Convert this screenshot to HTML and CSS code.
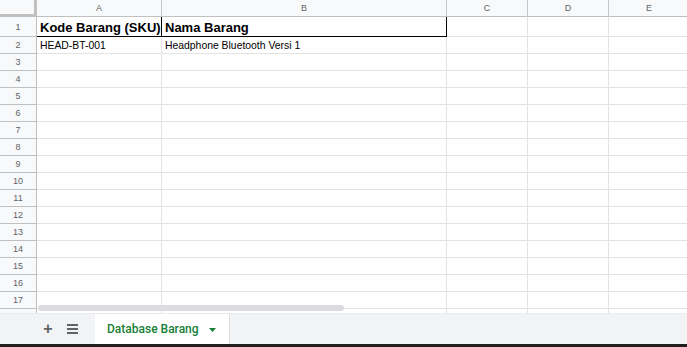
FILE: index.html
```html
<!DOCTYPE html>
<html lang="id">
<head>
  <meta charset="UTF-8" />
  <title>Database Barang</title>
  <link rel="stylesheet" href="styles.css">
</head>
<body>
  <div class="sheet">
    <div class="grid">
      <div class="corner"></div>
      <div class="col-head">A</div>
      <div class="col-head">B</div>
      <div class="col-head">C</div>
      <div class="col-head">D</div>
      <div class="col-head">E</div>

      <div class="row-head">1</div>
      <div class="cell title boxed">Kode Barang (SKU)</div>
      <div class="cell title boxed">Nama Barang</div>
      <div class="cell"></div><div class="cell"></div><div class="cell"></div>

      <div class="row-head">2</div>
      <div class="cell">HEAD-BT-001</div>
      <div class="cell">Headphone Bluetooth Versi 1</div>
      <div class="cell"></div><div class="cell"></div><div class="cell"></div>

      <div class="row-head">3</div><div class="cell"></div><div class="cell"></div><div class="cell"></div><div class="cell"></div><div class="cell"></div>
      <div class="row-head">4</div><div class="cell"></div><div class="cell"></div><div class="cell"></div><div class="cell"></div><div class="cell"></div>
      <div class="row-head">5</div><div class="cell"></div><div class="cell"></div><div class="cell"></div><div class="cell"></div><div class="cell"></div>
      <div class="row-head">6</div><div class="cell"></div><div class="cell"></div><div class="cell"></div><div class="cell"></div><div class="cell"></div>
      <div class="row-head">7</div><div class="cell"></div><div class="cell"></div><div class="cell"></div><div class="cell"></div><div class="cell"></div>
      <div class="row-head">8</div><div class="cell"></div><div class="cell"></div><div class="cell"></div><div class="cell"></div><div class="cell"></div>
      <div class="row-head">9</div><div class="cell"></div><div class="cell"></div><div class="cell"></div><div class="cell"></div><div class="cell"></div>
      <div class="row-head">10</div><div class="cell"></div><div class="cell"></div><div class="cell"></div><div class="cell"></div><div class="cell"></div>
      <div class="row-head">11</div><div class="cell"></div><div class="cell"></div><div class="cell"></div><div class="cell"></div><div class="cell"></div>
      <div class="row-head">12</div><div class="cell"></div><div class="cell"></div><div class="cell"></div><div class="cell"></div><div class="cell"></div>
      <div class="row-head">13</div><div class="cell"></div><div class="cell"></div><div class="cell"></div><div class="cell"></div><div class="cell"></div>
      <div class="row-head">14</div><div class="cell"></div><div class="cell"></div><div class="cell"></div><div class="cell"></div><div class="cell"></div>
      <div class="row-head">15</div><div class="cell"></div><div class="cell"></div><div class="cell"></div><div class="cell"></div><div class="cell"></div>
      <div class="row-head">16</div><div class="cell"></div><div class="cell"></div><div class="cell"></div><div class="cell"></div><div class="cell"></div>
      <div class="row-head">17</div><div class="cell"></div><div class="cell"></div><div class="cell"></div><div class="cell"></div><div class="cell"></div>
      <div class="row-head"></div><div class="cell"></div><div class="cell"></div><div class="cell"></div><div class="cell"></div><div class="cell"></div>
    </div>
    <div class="scrollbar"></div>
  </div>

  <div class="tab-bar">
    <span class="tab-btn plus">+</span>
    <span class="tab-btn">
      <svg width="11" height="10" viewBox="0 0 11 10"><rect x="0" y="0" width="11" height="2" fill="#5f6368"/><rect x="0" y="4" width="11" height="2" fill="#5f6368"/><rect x="0" y="8" width="11" height="2" fill="#5f6368"/></svg>
    </span>
    <div class="tab">
      <span>Database Barang</span>
      <svg width="7" height="4" viewBox="0 0 7 4"><path d="M0 0 L7 0 L3.5 4 Z" fill="#188038"/></svg>
    </div>
  </div>
  <div class="taskbar"></div>
</body>
</html>
```

FILE: styles.css
```css
* {
  box-sizing: border-box;
}
body {
  margin: 0;
  font-family: 'Liberation Sans', Arial, sans-serif;
  background: #fff;
  color: #000;
  overflow: hidden;
}
.sheet {
  position: relative;
  height: 313px;
  overflow: hidden;
}
.grid {
  display: grid;
  grid-template-columns: 37px 125px 285px 81px 81px 81px;
  grid-template-rows: 17px 20px;
  grid-auto-rows: 17px;
}
.corner {
  background: #f8f9fa;
  border-right: 3px solid #c0c0c0;
  border-bottom: 3px solid #c0c0c0;
}
.col-head {
  background: #f8f9fa;
  border-right: 1px solid #c7c7c7;
  border-bottom: 1px solid #c0c0c0;
  font-size: 9px;
  color: #5f6368;
  display: flex;
  align-items: center;
  justify-content: center;
}
.row-head {
  background: #f8f9fa;
  border-right: 1px solid #c0c0c0;
  border-bottom: 1px solid #c0c0c0;
  font-size: 9px;
  color: #5f6368;
  display: flex;
  align-items: center;
  justify-content: center;
}
.cell {
  border-right: 1px solid #e2e3e3;
  border-bottom: 1px solid #e2e3e3;
  font-size: 10.4px;
  padding: 0 3px;
  display: flex;
  align-items: center;
  white-space: nowrap;
  overflow: hidden;
}
.title {
  font-size: 13px;
  font-weight: bold;
  padding-top: 2px;
}
.boxed {
  border-right: 1px solid #000;
  border-bottom: 1px solid #000;
}
.scrollbar {
  position: absolute;
  left: 38px;
  top: 305px;
  width: 306px;
  height: 6px;
  border-radius: 3px;
  background: #dadce0;
}
.tab-bar {
  height: 31px;
  background: #f1f3f4;
  border-top: 1px solid #e8eaed;
  display: flex;
  align-items: stretch;
  padding-left: 36px;
}
.tab-btn {
  width: 24px;
  display: flex;
  align-items: center;
  justify-content: center;
  color: #5f6368;
  font-size: 16px;
}
.plus {
  font-weight: bold;
  padding-bottom: 1px;
}
.tab {
  margin-left: 11px;
  width: 134px;
  background: #fff;
  box-shadow: 1px 0 0 #dadce0;
  display: flex;
  align-items: center;
  gap: 10px;
  padding-left: 12px;
  color: #188038;
  font-family: Roboto, 'Liberation Sans', sans-serif;
  font-size: 12px;
  font-weight: 500;
}
.tab svg {
  margin-top: 1px;
}
.taskbar {
  height: 3px;
  background: #1f1f1f;
}
```
